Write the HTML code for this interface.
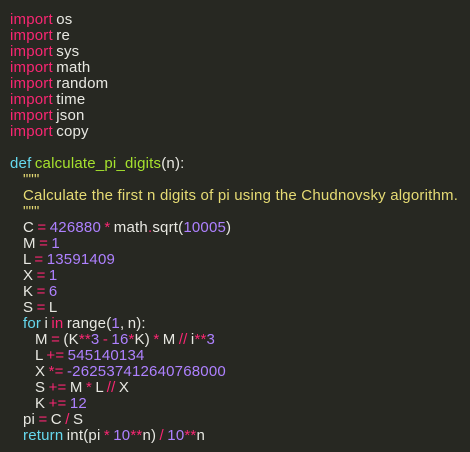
<!DOCTYPE html>
<html><head><style>
html,body{margin:0;padding:0;background:#272822;width:470px;height:452px;overflow:hidden}
pre{margin:0;padding:12px 0 0 10px;font-family:"Liberation Sans",sans-serif;font-size:15px;letter-spacing:0.2px;word-spacing:-1px;line-height:16px;color:#e8e8e2;white-space:pre}
.k{color:#f92672}.f{color:#a6e22e}.d{color:#66d9ef}.n{color:#ae81ff}.s{color:#e6db74}
.i1{padding-left:13px}.i2{padding-left:25px}
</style></head><body><pre><span class="k">import</span> os
<span class="k">import</span> re
<span class="k">import</span> sys
<span class="k">import</span> math
<span class="k">import</span> random
<span class="k">import</span> time
<span class="k">import</span> json
<span class="k">import</span> copy

<span class="d">def</span> <span class="f">calculate_pi_digits</span>(n):
<span class="i1 s">"""</span>
<span class="i1 s" style="word-spacing:0">Calculate the first n digits of pi using the Chudnovsky algorithm.</span>
<span class="i1 s">"""</span>
<span class="i1">C <span class="k">=</span> <span class="n">426880</span> <span class="k">*</span> math<span class="k">.</span>sqrt(<span class="n">10005</span>)</span>
<span class="i1">M <span class="k">=</span> <span class="n">1</span></span>
<span class="i1">L <span class="k">=</span> <span class="n">13591409</span></span>
<span class="i1">X <span class="k">=</span> <span class="n">1</span></span>
<span class="i1">K <span class="k">=</span> <span class="n">6</span></span>
<span class="i1">S <span class="k">=</span> L</span>
<span class="i1"><span class="d">for</span> i <span class="k">in</span> range(<span class="n">1</span>, n):</span>
<span class="i2">M <span class="k">=</span> (K<span class="k">**</span><span class="n">3</span> <span class="k">-</span> <span class="n">16</span><span class="k">*</span>K) <span class="k">*</span> M <span class="k">//</span> i<span class="k">**</span><span class="n">3</span></span>
<span class="i2">L <span class="k">+=</span> <span class="n">545140134</span></span>
<span class="i2">X <span class="k">*=</span> <span class="n">-262537412640768000</span></span>
<span class="i2">S <span class="k">+=</span> M <span class="k">*</span> L <span class="k">//</span> X</span>
<span class="i2">K <span class="k">+=</span> <span class="n">12</span></span>
<span class="i1">pi <span class="k">=</span> C <span class="k">/</span> S</span>
<span class="i1"><span class="d">return</span> int(pi <span class="k">*</span> <span class="n">10</span><span class="k">**</span>n) <span class="k">/</span> <span class="n">10</span><span class="k">**</span>n</span></pre></body></html>
